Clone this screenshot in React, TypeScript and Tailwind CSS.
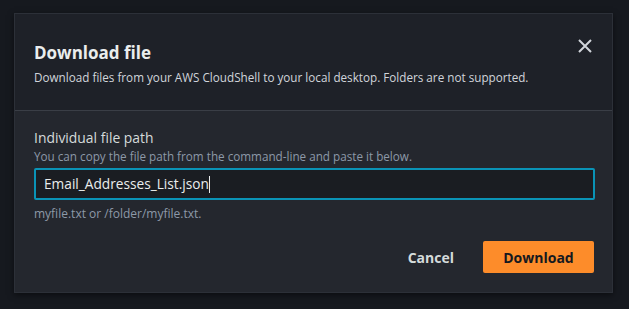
import React from "react";

const App = () => {
  return (
    <div
      className="w-[629px] h-[309px] bg-[#16191f] pt-[13px] pl-[14px]"
      style={{ fontFamily: '"Open Sans", "Noto Sans", sans-serif' }}
    >
      <div className="w-[599px] h-[280px] bg-[#24272e] border border-[#2c3038] shadow-[0_2px_6px_rgba(0,0,0,0.5)] flex flex-col">
        {/* header */}
        <div className="h-[97px] bg-[#1e2128] border-b border-[#3a3e46] pl-[19px] pr-[18px] pt-[27px] flex justify-between items-start">
          <div>
            <h2 className="text-[17px] leading-[24px] font-bold text-[#eaeded]">
              Download file
            </h2>
            <p className="text-[11.7px] leading-[18px] text-[#d1d5db] mt-[3px]">
              Download files from your AWS CloudShell to your local desktop. Folders are not supported.
            </p>
          </div>
          <button className="w-[22px] h-[22px] -mt-[6px] -mr-[2px] flex items-center justify-center text-[#d1d5db]">
            <svg width="14" height="14" viewBox="0 0 14 14">
              <path d="M1 1L13 13M13 1L1 13" stroke="currentColor" strokeWidth="2" />
            </svg>
          </button>
        </div>
        {/* body */}
        <div className="pl-[19px] pr-[18px] pt-[17px] flex-1">
          <label className="block text-[13.9px] leading-[20px] text-[#d5dbdb]">
            Individual file path
          </label>
          <p className="text-[11.7px] leading-[16px] text-[#8d99a8]">
            You can copy the file path from the command-line and paste it below.
          </p>
          <div className="mt-[4px] h-[32px] w-[561px] rounded-[2px] border-2 border-[#0a93b6] bg-[#1a1d22] flex items-center px-[8px]">
            <span className="text-[13.7px] text-[#eaeded]">Email_Addresses_List.json</span>
            <span className="w-px h-[17px] bg-[#eaeded]" />
          </div>
          <p className="text-[12px] leading-[16px] text-[#8d99a8] mt-[6px]">
            myfile.txt or /folder/myfile.txt.
          </p>
          <div className="flex justify-end items-center mt-[19px]">
            <button className="text-[14px] font-bold text-[#d5dbdb] mr-[29px]">Cancel</button>
            <button className="w-[111px] h-[32px] rounded-[2px] bg-[#fd8c2a] text-[14px] font-bold text-[#16191f]">
              Download
            </button>
          </div>
        </div>
      </div>
    </div>
  );
};

export default App;
